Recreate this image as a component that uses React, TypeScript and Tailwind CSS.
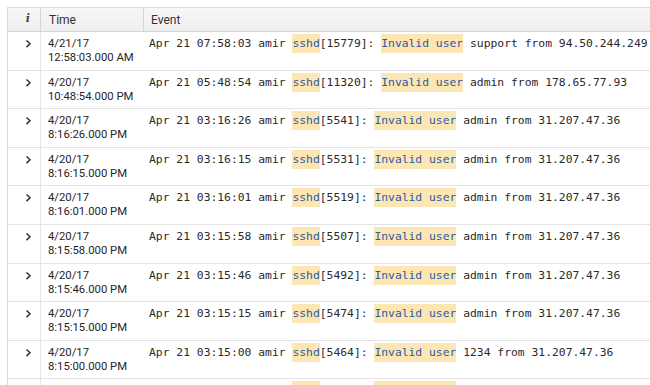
type Row = {
  date: string;
  time: string;
  stamp: string;
  pid: string;
  user: string;
  ip: string;
};

const rows: Row[] = [
  { date: '4/21/17', time: '12:58:03.000 AM', stamp: '07:58:03', pid: '15779', user: 'support', ip: '94.50.244.249' },
  { date: '4/20/17', time: '10:48:54.000 PM', stamp: '05:48:54', pid: '11320', user: 'admin', ip: '178.65.77.93' },
  { date: '4/20/17', time: '8:16:26.000 PM', stamp: '03:16:26', pid: '5541', user: 'admin', ip: '31.207.47.36' },
  { date: '4/20/17', time: '8:16:15.000 PM', stamp: '03:16:15', pid: '5531', user: 'admin', ip: '31.207.47.36' },
  { date: '4/20/17', time: '8:16:01.000 PM', stamp: '03:16:01', pid: '5519', user: 'admin', ip: '31.207.47.36' },
  { date: '4/20/17', time: '8:15:58.000 PM', stamp: '03:15:58', pid: '5507', user: 'admin', ip: '31.207.47.36' },
  { date: '4/20/17', time: '8:15:46.000 PM', stamp: '03:15:46', pid: '5492', user: 'admin', ip: '31.207.47.36' },
  { date: '4/20/17', time: '8:15:15.000 PM', stamp: '03:15:15', pid: '5474', user: 'admin', ip: '31.207.47.36' },
  { date: '4/20/17', time: '8:15:00.000 PM', stamp: '03:15:00', pid: '5464', user: '1234', ip: '31.207.47.36' },
  { date: '4/20/17', time: '8:14:48.000 PM', stamp: '03:14:48', pid: '5451', user: 'admin', ip: '31.207.47.36' }
];

function Mark({ children }: { children: string }) {
  return (
    <span className="inline-block bg-[#fce6b4] text-[#2d5aa0] leading-[19px]">
      {children}
    </span>
  );
}

function EventRow({ row }: { row: Row }) {
  return (
    <div className="flex h-[38.6px] border-b border-[#e3e3e3]">
      <div className="w-[33px] shrink-0 border-r border-[#e6e6e6] flex justify-end pr-[8px] pt-[2px]">
        {/* expand chevron */}
        <svg width="7" height="19" viewBox="0 0 7 19" className="text-[#333]">
          <path d="M1.5 6.5 L5 9.8 L1.5 13.1" fill="none" stroke="currentColor" strokeWidth="1.5" />
        </svg>
      </div>
      <div className="w-[103px] shrink-0 pl-[7px] pt-[5px] text-[11.3px] leading-[14px] text-[#262626] font-['Roboto',sans-serif]">
        <div>{row.date}</div>
        <div>{row.time}</div>
      </div>
      <div className="flex-1 pl-[5px] pt-[2px] text-[11.35px] leading-[19px] text-[#2a2a2a] whitespace-pre font-['DejaVu_Sans_Mono',monospace]">
        {`Apr 21 ${row.stamp} amir `}
        <Mark>sshd</Mark>
        {`[${row.pid}]: `}
        <Mark>Invalid user</Mark>
        {` ${row.user} from ${row.ip}`}
      </div>
    </div>
  );
}

export default function App() {
  return (
    <div className="w-[650px] h-[385px] overflow-hidden bg-white pt-[7px] pl-[7px]">
      <div className="border-l border-t border-[#dadada]">
        <header className="flex h-[24px] bg-gradient-to-b from-[#f7f7f7] to-[#efefef] border-b border-[#d4d4d4] text-[12px] text-[#333] font-['Roboto',sans-serif]">
          <div className="w-[33px] shrink-0 border-r border-[#d4d4d4] flex items-center justify-end pr-[10px]">
            <span className="font-['DejaVu_Serif',serif] italic font-bold text-[11px] text-[#444]">i</span>
          </div>
          <div className="w-[103px] shrink-0 border-r border-[#d4d4d4] flex items-center pl-[8px]">
            Time
          </div>
          <div className="flex-1 flex items-center pl-[7px]">Event</div>
        </header>
        {rows.map((row, i) => (
          <EventRow key={i} row={row} />
        ))}
      </div>
    </div>
  );
}
